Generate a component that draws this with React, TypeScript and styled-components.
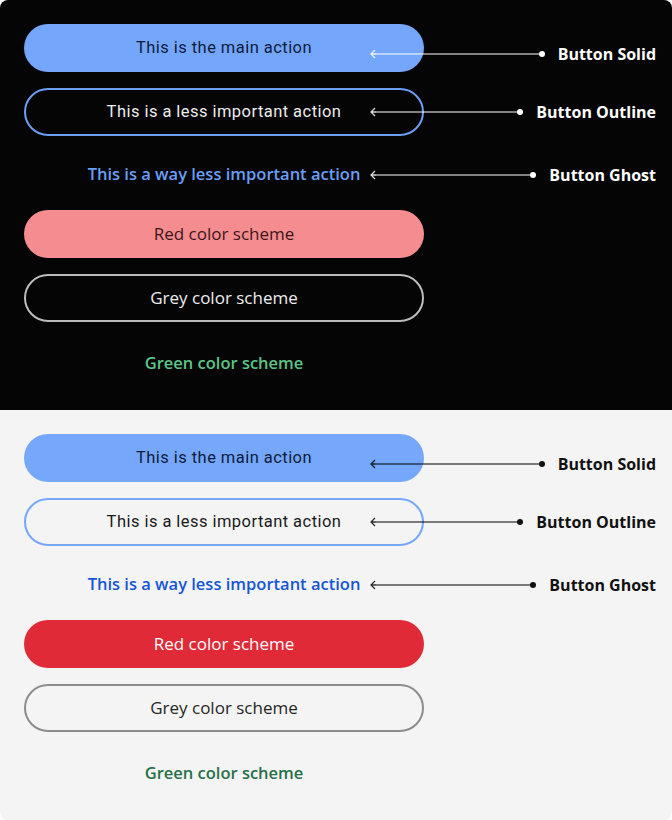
import React from "react";
import styled, { createGlobalStyle, css } from "styled-components";

const Global = createGlobalStyle`
  html, body { margin: 0; padding: 0; background: #ffffff; }
  body { font-family: "Open Sans", sans-serif; }
`;

type Mode = "dark" | "light";
type Variant =
  | "solid"
  | "outline"
  | "ghost"
  | "redSolid"
  | "greyOutline"
  | "greenGhost";

const Frame = styled.div`
  width: 672px;
  height: 820px;
  border-radius: 8px;
  overflow: hidden;
  display: flex;
  flex-direction: column;
`;

const Panel = styled.section<{ $mode: Mode }>`
  height: 410px;
  box-sizing: border-box;
  padding: 24px 0 24px 24px;
  display: flex;
  flex-direction: column;
  gap: 16px;
  background: ${(p) => (p.$mode === "dark" ? "#050505" : "#f4f4f4")};
`;

const Row = styled.div<{ $h: number }>`
  position: relative;
  height: ${(p) => p.$h}px;
  display: flex;
  align-items: center;
`;

const palette = {
  dark: {
    solid: { bg: "#74a6fb", fg: "#0e1b3d", border: "transparent" },
    outline: { bg: "transparent", fg: "#ececec", border: "#6c9ef3" },
    ghost: { bg: "transparent", fg: "#6a9ff7", border: "transparent" },
    redSolid: { bg: "#f58d90", fg: "#3a1619", border: "transparent" },
    greyOutline: { bg: "transparent", fg: "#eeeeee", border: "#bcbcbc" },
    greenGhost: { bg: "transparent", fg: "#5cc487", border: "transparent" },
  },
  light: {
    solid: { bg: "#75a7fb", fg: "#0e1b3d", border: "transparent" },
    outline: { bg: "transparent", fg: "#1a1a1a", border: "#75a7fb" },
    ghost: { bg: "transparent", fg: "#1656d4", border: "transparent" },
    redSolid: { bg: "#e02a37", fg: "#ffffff", border: "transparent" },
    greyOutline: { bg: "transparent", fg: "#262626", border: "#8c8c8c" },
    greenGhost: { bg: "transparent", fg: "#27704a", border: "transparent" },
  },
};

const plexLike = css`
  font-family: "Roboto", "Liberation Sans", sans-serif;
  font-size: 16.5px;
  font-weight: 400;
  letter-spacing: 0.45px;
  padding-bottom: 1px;
`;
const workLike = css`
  font-family: "Open Sans", "Liberation Sans", sans-serif;
  font-size: 17px;
  font-weight: 400;
  padding-bottom: 2px;
`;
const ghostLike = css`
  font-family: "Open Sans", "Liberation Sans", sans-serif;
  font-size: 16.5px;
  font-weight: 600;
`;

const Btn = styled.button<{ $mode: Mode; $v: Variant; $h: number }>`
  width: 400px;
  height: ${(p) => p.$h}px;
  border-radius: 24px;
  box-sizing: border-box;
  display: flex;
  align-items: center;
  justify-content: center;
  padding: 0;
  margin: 0;
  cursor: pointer;
  background: ${(p) => palette[p.$mode][p.$v].bg};
  color: ${(p) => palette[p.$mode][p.$v].fg};
  border: 2px solid ${(p) => palette[p.$mode][p.$v].border};
  ${(p) =>
    p.$v === "solid" || p.$v === "outline"
      ? plexLike
      : p.$v === "ghost" || p.$v === "greenGhost"
      ? ghostLike
      : workLike}
`;

const Note = styled.div<{ $top: number }>`
  position: absolute;
  left: 346px;
  right: 16px;
  top: ${(p) => p.$top}px;
  height: 10px;
  display: flex;
  align-items: center;
  pointer-events: none;
`;

const Arrow = styled.svg`
  flex: 0 0 auto;
  display: block;
`;

const Line = styled.div<{ $mode: Mode }>`
  flex: 1;
  height: 2px;
  background: ${(p) =>
    p.$mode === "dark" ? "rgba(255,255,255,0.5)" : "rgba(0,0,0,0.5)"};
`;

const Dot = styled.span<{ $mode: Mode }>`
  width: 6px;
  height: 6px;
  border-radius: 50%;
  margin-left: -2px;
  background: ${(p) => (p.$mode === "dark" ? "#ffffff" : "#111111")};
`;

const Label = styled.span<{ $mode: Mode }>`
  margin-left: 13px;
  font-family: "Open Sans", "Liberation Sans", sans-serif;
  font-weight: 700;
  font-size: 16px;
  white-space: nowrap;
  color: ${(p) => (p.$mode === "dark" ? "#ffffff" : "#111111")};
`;

const Annotation = ({ mode, top, text }: { mode: Mode; top: number; text: string }) => (
  <Note $top={top}>
    <Arrow width="6" height="10" viewBox="0 0 6 10">
      <path
        d="M5 1 L1 5 L5 9 M1 5 L6 5"
        fill="none"
        stroke={mode === "dark" ? "rgba(255,255,255,0.85)" : "rgba(0,0,0,0.8)"}
        strokeWidth="1.3"
      />
    </Arrow>
    <Line $mode={mode} />
    <Dot $mode={mode} />
    <Label $mode={mode}>{text}</Label>
  </Note>
);

const rows: { v: Variant; text: string; h: number; note?: string; top?: number }[] = [
  { v: "solid", text: "This is the main action", h: 48, note: "Button Solid", top: 25 },
  { v: "outline", text: "This is a less important action", h: 48, note: "Button Outline", top: 19 },
  { v: "ghost", text: "This is a way less important action", h: 42, note: "Button Ghost", top: 18 },
  { v: "redSolid", text: "Red color scheme", h: 48 },
  { v: "greyOutline", text: "Grey color scheme", h: 48 },
  { v: "greenGhost", text: "Green color scheme", h: 48 },
];

const Section = ({ mode }: { mode: Mode }) => (
  <Panel $mode={mode}>
    {rows.map((r) => (
      <Row key={r.v} $h={r.h}>
        <Btn $mode={mode} $v={r.v} $h={r.h}>
          {r.text}
        </Btn>
        {r.note && <Annotation mode={mode} top={r.top ?? 0} text={r.note} />}
      </Row>
    ))}
  </Panel>
);

export default function App() {
  return (
    <>
      <Global />
      <Frame>
        <Section mode="dark" />
        <Section mode="light" />
      </Frame>
    </>
  );
}
